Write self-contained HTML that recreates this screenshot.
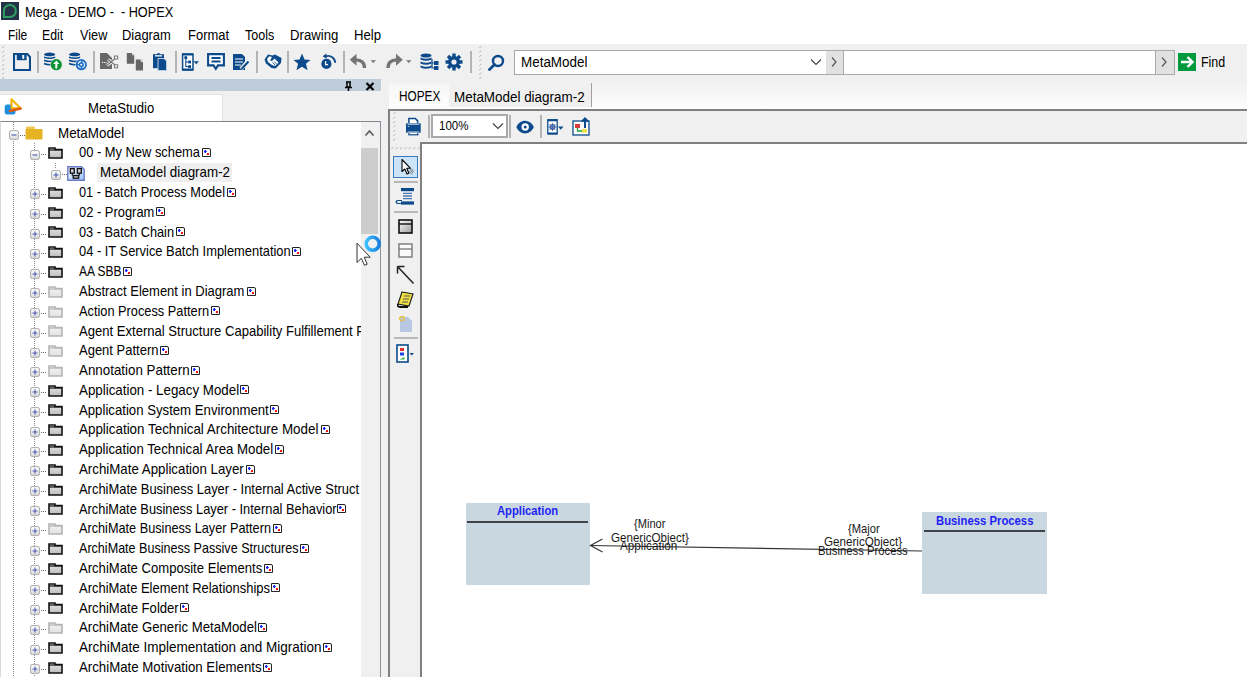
<!DOCTYPE html>
<html><head><meta charset="utf-8"><style>
html,body{margin:0;padding:0}
body{width:1247px;height:677px;position:relative;overflow:hidden;background:#fff;font-family:"Liberation Sans", sans-serif}
.t{position:absolute;white-space:nowrap;font-family:"Liberation Sans", sans-serif}
.tr{font-size:13.9px;line-height:13.9px;color:#000}
.bd{width:9px;height:9px;box-sizing:border-box;border:1.5px solid #222;border-radius:0 2px 0 0;background:radial-gradient(circle at 33% 36%,#1020ff 0 1.1px,transparent 1.5px),radial-gradient(circle at 70% 73%,#ff1010 0 1.1px,transparent 1.5px),#fff}
</style></head><body>
<svg style="position:absolute;left:1px;top:2px" width="18" height="18" viewBox="0 0 18 18"><rect width="18" height="18" fill="#233246"/><path d="M2.9 15 V8.6 A6 6 0 1 1 8.9 14.9 Z" fill="none" stroke="#2e9e62" stroke-width="2" stroke-linejoin="miter"/></svg>
<div class="t " style="left:25px;top:5.11px;font-size:14.4px;line-height:14.4px;color:#000;transform:scaleX(0.8820);transform-origin:0 0;">Mega - DEMO -  - HOPEX</div>
<div class="t " style="left:7.6px;top:27.75px;font-size:14px;line-height:14px;color:#000;transform:scaleX(0.8511);transform-origin:0 0;">File</div>
<div class="t " style="left:42.3px;top:27.75px;font-size:14px;line-height:14px;color:#000;transform:scaleX(0.8788);transform-origin:0 0;">Edit</div>
<div class="t " style="left:79.5px;top:27.75px;font-size:14px;line-height:14px;color:#000;transform:scaleX(0.9072);transform-origin:0 0;">View</div>
<div class="t " style="left:122.3px;top:27.75px;font-size:14px;line-height:14px;color:#000;transform:scaleX(0.9224);transform-origin:0 0;">Diagram</div>
<div class="t " style="left:187.5px;top:27.75px;font-size:14px;line-height:14px;color:#000;transform:scaleX(0.9270);transform-origin:0 0;">Format</div>
<div class="t " style="left:244.7px;top:27.75px;font-size:14px;line-height:14px;color:#000;transform:scaleX(0.8934);transform-origin:0 0;">Tools</div>
<div class="t " style="left:289.6px;top:27.75px;font-size:14px;line-height:14px;color:#000;transform:scaleX(0.9406);transform-origin:0 0;">Drawing</div>
<div class="t " style="left:353.6px;top:27.75px;font-size:14px;line-height:14px;color:#000;transform:scaleX(0.9377);transform-origin:0 0;">Help</div>
<div style="position:absolute;left:0px;top:44px;width:1247px;height:35px;background:#f0f0f0"></div>
<svg style="position:absolute;left:2px;top:46px" width="3" height="33"><path d="M2.2 0.3 L0.3 2.2 M2.2 4.7 L0.3 6.6 M2.2 9.1 L0.3 11.0 M2.2 13.5 L0.3 15.4 M2.2 17.9 L0.3 19.8 M2.2 22.3 L0.3 24.2 M2.2 26.7 L0.3 28.6 M2.2 31.1 L0.3 33.0 " stroke="#aaaaaa" stroke-width="1"/></svg>
<svg style="position:absolute;left:479px;top:46px" width="3" height="33"><path d="M2.2 0.3 L0.3 2.2 M2.2 4.7 L0.3 6.6 M2.2 9.1 L0.3 11.0 M2.2 13.5 L0.3 15.4 M2.2 17.9 L0.3 19.8 M2.2 22.3 L0.3 24.2 M2.2 26.7 L0.3 28.6 M2.2 31.1 L0.3 33.0 " stroke="#aaaaaa" stroke-width="1"/></svg>
<div style="position:absolute;left:37px;top:51px;width:1px;height:22px;background:#b4b4b4"></div>
<div style="position:absolute;left:38px;top:51px;width:1px;height:22px;background:#b4b4b4"></div>
<div style="position:absolute;left:93px;top:51px;width:1px;height:22px;background:#b4b4b4"></div>
<div style="position:absolute;left:94px;top:51px;width:1px;height:22px;background:#b4b4b4"></div>
<div style="position:absolute;left:175px;top:51px;width:1px;height:22px;background:#b4b4b4"></div>
<div style="position:absolute;left:176px;top:51px;width:1px;height:22px;background:#b4b4b4"></div>
<div style="position:absolute;left:256px;top:51px;width:1px;height:22px;background:#b4b4b4"></div>
<div style="position:absolute;left:257px;top:51px;width:1px;height:22px;background:#b4b4b4"></div>
<div style="position:absolute;left:287px;top:51px;width:1px;height:22px;background:#b4b4b4"></div>
<div style="position:absolute;left:288px;top:51px;width:1px;height:22px;background:#b4b4b4"></div>
<div style="position:absolute;left:343px;top:51px;width:1px;height:22px;background:#b4b4b4"></div>
<div style="position:absolute;left:344px;top:51px;width:1px;height:22px;background:#b4b4b4"></div>
<div style="position:absolute;left:470px;top:51px;width:1px;height:22px;background:#b4b4b4"></div>
<div style="position:absolute;left:471px;top:51px;width:1px;height:22px;background:#b4b4b4"></div>
<svg style="position:absolute;left:13px;top:53px" width="18" height="18" viewBox="0 0 18 18"><path d="M1 1 H14.3 L17 3.9 V17 H1 Z" fill="none" stroke="#0c4a8b" stroke-width="2.1"/><rect x="3.8" y="2" width="9.8" height="5.2" fill="#0c4a8b"/><rect x="9.3" y="2" width="1.9" height="3.8" fill="#fff"/></svg>
<svg style="position:absolute;left:43px;top:52px" width="21" height="20" viewBox="0 0 21 20"><ellipse cx="6.6" cy="2.4" rx="5.6" ry="1.8" fill="#0c4a8b"/><path d="M1 4.4 Q6.6 6.6 12.2 4.4 V6 Q6.6 8.2 1 6Z M1 7.6 Q6.6 9.8 12.2 7.6 V9.2 Q6.6 11.4 1 9.2Z M1 10.8 Q6.6 13 12.2 10.8 V12.4 Q6.6 14.6 1 12.4Z" fill="#0c4a8b"/><circle cx="13.3" cy="12.7" r="6" fill="#f0f0f0"/><circle cx="13.3" cy="12.7" r="5.6" fill="#0a9436"/><path d="M13.3 16.6 V10.5" stroke="#fff" stroke-width="2"/><path d="M10.2 12 L13.3 8.6 L16.4 12Z" fill="#fff"/></svg>
<svg style="position:absolute;left:68px;top:52px" width="21" height="20" viewBox="0 0 21 20"><ellipse cx="6.6" cy="2.4" rx="5.6" ry="1.8" fill="#0c4a8b"/><path d="M1 4.4 Q6.6 6.6 12.2 4.4 V6 Q6.6 8.2 1 6Z M1 7.6 Q6.6 9.8 12.2 7.6 V9.2 Q6.6 11.4 1 9.2Z M1 10.8 Q6.6 13 12.2 10.8 V12.4 Q6.6 14.6 1 12.4Z" fill="#0c4a8b"/><circle cx="13.3" cy="12.7" r="6" fill="#f0f0f0"/><circle cx="13.3" cy="12.7" r="5.6" fill="#1f6fc8"/><circle cx="13.3" cy="12.7" r="3.3" fill="none" stroke="#fff" stroke-width="1.1" stroke-dasharray="4 1.5"/><circle cx="13.3" cy="12.7" r="1" fill="#fff"/></svg>
<svg style="position:absolute;left:100px;top:53px" width="19" height="17" viewBox="0 0 19 17"><path d="M0 0 H7 L12 5 V16 H0Z" fill="#686868"/><path d="M2 9.5 H7" stroke="#fff" stroke-width="1" stroke-dasharray="1.2 1"/><path d="M7 12.5 L17 4.5 M8 6.5 L17 13" stroke="#f0f0f0" stroke-width="3"/><path d="M7 12.5 L15 5.5 M8 6.5 L15 12" stroke="#777" stroke-width="1.3"/><rect x="14.5" y="3" width="3.2" height="3" fill="none" stroke="#777" stroke-width="1"/><rect x="14.5" y="11.8" width="3.2" height="3" fill="none" stroke="#777" stroke-width="1"/></svg>
<svg style="position:absolute;left:126px;top:53px" width="18" height="18" viewBox="0 0 18 18"><path d="M0.8 0 H6.5 L8.2 1.8 V10.8 H0.8Z M9.8 6.5 H15 L17 8.5 V17.5 H9.8Z" fill="#666"/><path d="M6.5 0 V1.8 H8.2 M15 6.5 V8.5 H17" stroke="#fff" stroke-width="0.8" fill="none"/></svg>
<svg style="position:absolute;left:152px;top:53px" width="15" height="18" viewBox="0 0 15 18"><path d="M1 1.2 H12 V15.2 H1Z" fill="#0c4a8b"/><circle cx="6.5" cy="1" r="1.2" fill="#0c4a8b"/><rect x="3" y="2.2" width="7" height="1.3" fill="#fff"/><path d="M6 5.5 H12 L14.5 8 V17.5 H6Z" fill="#0c4a8b" stroke="#b8cce0" stroke-width="1"/></svg>
<svg style="position:absolute;left:181px;top:53px" width="20" height="18" viewBox="0 0 20 18"><rect x="1.6" y="1" width="10.4" height="16" fill="#fff" stroke="#0c4a8b" stroke-width="1.5"/><path d="M1.6 1.5 H12 M1.6 16.5 H12" stroke="#0c4a8b" stroke-width="2"/><path d="M4.8 4 V13.5 H8 M4.8 9 H8" stroke="#0c4a8b" stroke-width="1.1" fill="none"/><rect x="3.4" y="3.2" width="2.8" height="2.8" fill="#0c4a8b"/><rect x="7.2" y="7.6" width="2.8" height="2.8" fill="#0c4a8b"/><rect x="7.2" y="12.2" width="2.8" height="2.8" fill="#0c4a8b"/><path d="M12.5 8.2 H18 L15.25 11.3Z" fill="#0c4a8b"/></svg>
<svg style="position:absolute;left:207px;top:53px" width="18" height="18" viewBox="0 0 18 18"><path d="M1.1 1.1 H16.9 V12.4 H11 L8.8 15.8 L6.6 12.4 H1.1Z" fill="#fff" stroke="#0c4a8b" stroke-width="2.1"/><path d="M4.5 5 H13.5 M4.5 8.5 H13.5" stroke="#0c4a8b" stroke-width="1.8"/></svg>
<svg style="position:absolute;left:232px;top:53px" width="18" height="18" viewBox="0 0 18 18"><path d="M1 1 H10 L13 4 V17 H1Z" fill="#0c4a8b"/><path d="M3 6 H11 M3 9 H11 M3 12 H9" stroke="#fff" stroke-width="1.2"/><path d="M9 16 L16 8" stroke="#f0f0f0" stroke-width="4"/><path d="M9.5 16 L16.5 8.5" stroke="#0c4a8b" stroke-width="2"/></svg>
<svg style="position:absolute;left:264px;top:53px" width="18" height="16" viewBox="0 0 18 16"><path d="M0.5 6.5 L4 1.5 L8.5 2.5 L11 1.5 L17.5 5 L17 10 L11.5 15.5 L7.5 15 L2 10.5Z" fill="#0c4a8b"/><path d="M3 6 L5.3 3.3 L8 4 L6 7.5 L8 8 L10.5 5.5 L14.5 9.5 L11 13 L8 12 L4 9Z" fill="#fff"/><path d="M8.5 9.5 L11 12 M10 8.5 L12.5 11" stroke="#0c4a8b" stroke-width="0.9"/></svg>
<svg style="position:absolute;left:293px;top:53px" width="18" height="18" viewBox="0 0 18 18"><path d="M9 0.5 L11.5 6.6 L17.5 6.9 L12.9 10.8 L14.6 17.3 L9 13.8 L3.4 17.3 L5.1 10.8 L0.5 6.9 L6.5 6.6Z" fill="#0c4a8b"/></svg>
<svg style="position:absolute;left:320px;top:53px" width="17" height="18" viewBox="0 0 17 18"><circle cx="6.4" cy="10.9" r="5.1" fill="#0c4a8b"/><path d="M5.6 8.3 V11.6 H8" stroke="#fff" stroke-width="1.3" fill="none"/><path d="M6 3.3 A7 7 0 0 1 15.2 9.8" stroke="#0c4a8b" stroke-width="1.9" fill="none"/><path d="M2.6 3.2 L6.5 0.6 V5.8Z" fill="#0c4a8b"/></svg>
<svg style="position:absolute;left:349px;top:53px" width="28" height="18" viewBox="0 0 28 18"><path d="M15.5 15 Q15.5 6.8 7 6.8" stroke="#747474" stroke-width="3.3" fill="none"/><path d="M0.8 6.8 L7.5 0.8 V12.8Z" fill="#747474"/><path d="M21.5 7.2 H27 L24.25 10Z" fill="#747474"/></svg>
<svg style="position:absolute;left:386px;top:53px" width="27" height="18" viewBox="0 0 27 18"><path d="M2 15 Q2 6.8 10.5 6.8" stroke="#747474" stroke-width="3.3" fill="none"/><path d="M16.8 6.8 L10 0.8 V12.8Z" fill="#747474"/><path d="M20 7.2 H25.5 L22.75 10Z" fill="#747474"/></svg>
<svg style="position:absolute;left:420px;top:53px" width="19" height="18" viewBox="0 0 19 18"><ellipse cx="6" cy="2.5" rx="5.5" ry="2" fill="#0c4a8b"/><path d="M0.5 4.5 Q6 7 11.5 4.5 V6.5 Q6 9 0.5 6.5Z M0.5 8.5 Q6 11 11.5 8.5 V10.5 Q6 13 0.5 10.5Z M0.5 12.5 Q6 15 11.5 12.5 V14.5 Q6 17 0.5 14.5Z" fill="#0c4a8b"/><path d="M12 6 V15 H15 M12 10 H15" stroke="#0c4a8b" stroke-width="1.2" fill="none"/><rect x="14" y="8" width="4.5" height="4" fill="#0c4a8b"/><rect x="14" y="13" width="4.5" height="4" fill="#0c4a8b"/></svg>
<svg style="position:absolute;left:445px;top:53px" width="18" height="18" viewBox="0 0 18 18"><circle cx="9" cy="9" r="6" fill="#0c4a8b"/><path d="M9 0.5 V17.5 M0.5 9 H17.5 M3 3 L15 15 M15 3 L3 15" stroke="#0c4a8b" stroke-width="3.4"/><circle cx="9" cy="9" r="2.6" fill="#f0f0f0"/></svg>
<svg style="position:absolute;left:488px;top:54px" width="17" height="17" viewBox="0 0 17 17"><circle cx="10" cy="7" r="5" fill="none" stroke="#0c4a8b" stroke-width="2.4"/><path d="M6.5 10.5 L1.5 15.5" stroke="#0c4a8b" stroke-width="2.8" stroke-linecap="round"/></svg>
<div style="position:absolute;left:514px;top:50px;width:311px;height:23px;background:#fff;border:1px solid #a9a9a9"></div>
<div class="t " style="left:521.3px;top:55.15px;font-size:14px;line-height:14px;color:#000;transform:scaleX(0.9588);transform-origin:0 0;">MetaModel</div>
<svg style="position:absolute;left:810px;top:58px" width="12" height="8" viewBox="0 0 12 8"><path d="M1 1.5 L6 6.5 L11 1.5" stroke="#444" stroke-width="1.2" fill="none"/></svg>
<div style="position:absolute;left:826px;top:50px;width:17px;height:23px;background:#e1e1e1;border:1px solid #a9a9a9;border-left:none"></div>
<svg style="position:absolute;left:830px;top:56px" width="8" height="12" viewBox="0 0 8 12"><path d="M2 1.5 L6 6 L2 10.5" stroke="#555" stroke-width="1.2" fill="none"/></svg>
<div style="position:absolute;left:844px;top:50px;width:311px;height:23px;background:#fff;border:1px solid #a9a9a9;border-left:none"></div>
<div style="position:absolute;left:1155px;top:50px;width:18px;height:23px;background:#e1e1e1;border:1px solid #a9a9a9"></div>
<svg style="position:absolute;left:1160px;top:56px" width="8" height="12" viewBox="0 0 8 12"><path d="M2 1.5 L6 6 L2 10.5" stroke="#555" stroke-width="1.2" fill="none"/></svg>
<svg style="position:absolute;left:1178px;top:53px" width="18" height="18" viewBox="0 0 18 18"><rect width="18" height="18" fill="#009a3e"/><path d="M3 9 H14 M9.5 4 L14.5 9 L9.5 14" stroke="#fff" stroke-width="2.4" fill="none"/></svg>
<div class="t " style="left:1200.5px;top:54.75px;font-size:14px;line-height:14px;color:#000;transform:scaleX(0.8886);transform-origin:0 0;">Find</div>
<div style="position:absolute;left:0px;top:79px;width:381px;height:12px;background:#bfcddb"></div>
<svg style="position:absolute;left:344px;top:81px" width="9" height="11" viewBox="0 0 9 11"><path d="M2 1 H7 M3 1 V6 H6 V1 M1 6.5 H8 M4.5 6.5 V11" stroke="#000" stroke-width="1.5" fill="none"/></svg>
<svg style="position:absolute;left:365px;top:82px" width="10" height="9" viewBox="0 0 10 9"><path d="M1.5 1 L8.5 8 M8.5 1 L1.5 8" stroke="#000" stroke-width="2.2"/></svg>
<div style="position:absolute;left:0px;top:91px;width:381px;height:30px;background:#f0f0f0"></div>
<div style="position:absolute;left:0px;top:94px;width:223px;height:27px;background:#fff;border-top:1px solid #e3e3e3;border-right:1px solid #e3e3e3;box-sizing:border-box"></div>
<svg style="position:absolute;left:3px;top:96px" width="20" height="20" viewBox="0 0 20 20"><rect x="1.7" y="8.5" width="10.8" height="10" rx="2.5" fill="#1e90e0"/><path d="M8.4 3.2 L8.6 12.2 L17.6 12.3Z" fill="#fff" stroke="#f3b400" stroke-width="2" stroke-linejoin="round"/><path d="M7 15 L17.5 12.6" stroke="#e05a10" stroke-width="2.6" stroke-linecap="round"/></svg>
<div class="t " style="left:87.6px;top:101.15px;font-size:14px;line-height:14px;color:#000;transform:scaleX(0.9362);transform-origin:0 0;">MetaStudio</div>
<div style="position:absolute;left:0px;top:121px;width:381px;height:556px;background:#fff;border-top:1px solid #828790;border-right:1px solid #8a939c;border-left:1px solid #d9d9d9;box-sizing:border-box"></div>
<div style="position:absolute;left:361px;top:122px;width:19px;height:555px;background:#f0f0f0"></div>
<svg style="position:absolute;left:364px;top:129px" width="11" height="8" viewBox="0 0 11 8"><path d="M1.5 6.5 L5.5 2 L9.5 6.5" stroke="#606060" stroke-width="1.8" fill="none"/></svg>
<div style="position:absolute;left:361px;top:148px;width:17px;height:86px;background:#cdcdcd"></div>
<div style="position:absolute;left:381px;top:79px;width:866px;height:598px;background:#f0f0f0"></div>
<div style="position:absolute;left:389px;top:79px;width:858px;height:30px;background:linear-gradient(#f0f0f0,#fdfdfd)"></div>
<div style="position:absolute;left:389px;top:85px;width:60px;height:22px;background:linear-gradient(#f7f7f7,#fdfdfd)"></div>
<div class="t " style="left:399px;top:88.65px;font-size:14px;line-height:14px;color:#000;transform:scaleX(0.8426);transform-origin:0 0;">HOPEX</div>
<div style="position:absolute;left:449px;top:83px;width:143px;height:24px;background:#f0f0f0;border-right:1px solid #a0a0a0;box-sizing:border-box"></div>
<div class="t " style="left:454px;top:89.55px;font-size:14px;line-height:14px;color:#000;transform:scaleX(0.9591);transform-origin:0 0;">MetaModel diagram-2</div>
<div style="position:absolute;left:388px;top:109px;width:859px;height:568px;background:#f0f0f0;border-left:2px solid #808080;border-top:2px solid #808080;box-sizing:border-box"></div>
<svg style="position:absolute;left:393px;top:112px" width="3" height="30"><path d="M2.2 0.3 L0.3 2.2 M2.2 4.7 L0.3 6.6 M2.2 9.1 L0.3 11.0 M2.2 13.5 L0.3 15.4 M2.2 17.9 L0.3 19.8 M2.2 22.3 L0.3 24.2 M2.2 26.7 L0.3 28.6 " stroke="#aaaaaa" stroke-width="1"/></svg>
<div style="position:absolute;left:428px;top:115px;width:1px;height:23px;background:#b4b4b4"></div>
<div style="position:absolute;left:429px;top:115px;width:1px;height:23px;background:#b4b4b4"></div>
<svg style="position:absolute;left:406px;top:117px" width="16" height="19" viewBox="0 0 16 19"><path d="M2.9 6.5 V1.4 H9.3 L11.6 3.9 V6.5" fill="#fff" stroke="#0c4a8b" stroke-width="1.5"/><rect x="0" y="6.3" width="14.7" height="9.4" fill="#0c4a8b"/><rect x="1.5" y="6.5" width="11.7" height="1.4" fill="#a9bfd8"/><rect x="1.8" y="9" width="1.6" height="1" fill="#a9bfd8"/><rect x="2.9" y="15.2" width="8.9" height="2.6" fill="#fff" stroke="#0c4a8b" stroke-width="1.2"/><rect x="1.5" y="14.6" width="11.7" height="0.9" fill="#fff"/></svg>
<div style="position:absolute;left:431px;top:114px;width:77px;height:24px;background:#fff;border:2px solid #a9a9a9;box-sizing:border-box"></div>
<div class="t " style="left:438.6px;top:119.56px;font-size:12.8px;line-height:12.8px;color:#000;transform:scaleX(0.8980);transform-origin:0 0;">100%</div>
<svg style="position:absolute;left:492px;top:122px" width="12" height="8" viewBox="0 0 12 8"><path d="M1 1.5 L6 6.5 L11 1.5" stroke="#444" stroke-width="1.2" fill="none"/></svg>
<div style="position:absolute;left:509px;top:115px;width:1px;height:23px;background:#b4b4b4"></div>
<div style="position:absolute;left:510px;top:115px;width:1px;height:23px;background:#b4b4b4"></div>
<svg style="position:absolute;left:516px;top:120px" width="19" height="14" viewBox="0 0 19 14"><path d="M0.3 7 C4 -1.5 14 -1.5 17.9 7 C14 15.5 4 15.5 0.3 7Z" fill="#0c4a8b"/><circle cx="9.2" cy="7" r="3.7" fill="#fff"/><circle cx="9.2" cy="7" r="1.5" fill="#0c4a8b"/></svg>
<div style="position:absolute;left:540px;top:115px;width:1px;height:23px;background:#b4b4b4"></div>
<div style="position:absolute;left:541px;top:115px;width:1px;height:23px;background:#b4b4b4"></div>
<svg style="position:absolute;left:547px;top:119px" width="18" height="16" viewBox="0 0 18 16"><rect x="0.8" y="0.8" width="9.4" height="14" fill="#fff" stroke="#0c4a8b" stroke-width="1.3"/><path d="M0.8 1.2 H10.2 M0.8 14.5 H10.2" stroke="#0c4a8b" stroke-width="2"/><circle cx="5.5" cy="8" r="2.2" fill="none" stroke="#4a6aa8" stroke-width="1.6"/><path d="M5.5 4 V12 M1.5 8 H9.5 M2.7 5.2 L8.3 10.8 M8.3 5.2 L2.7 10.8" stroke="#4a6aa8" stroke-width="1"/><path d="M11 7.5 H16.5 L13.75 10.8Z" fill="#0c4a8b"/></svg>
<svg style="position:absolute;left:572px;top:117px" width="18" height="19" viewBox="0 0 18 19"><rect x="1" y="4" width="16" height="14" fill="#fff" stroke="#0c4a8b" stroke-width="1.3"/><rect x="3" y="7" width="5" height="4" fill="#d63a3a"/><rect x="10" y="12" width="5" height="3.5" fill="#f0e040"/><path d="M5.5 11 V14 H10" stroke="#20a040" stroke-width="1.3" fill="none"/><path d="M13 11 V2 M10 4.5 L13 1.5 L16 4.5" stroke="#0c4a8b" stroke-width="2" fill="none"/></svg>
<div style="position:absolute;left:420px;top:142px;width:827px;height:535px;background:#fff;border-left:2px solid #808080;border-top:2px solid #808080;box-sizing:border-box"></div>
<svg style="position:absolute;left:391px;top:147px" width="29" height="3"><path d="M2.2 0.3 L0.3 2.2 M6.6 0.3 L4.7 2.2 M11.0 0.3 L9.1 2.2 M15.4 0.3 L13.5 2.2 M19.8 0.3 L17.9 2.2 M24.2 0.3 L22.3 2.2 M28.6 0.3 L26.7 2.2 " stroke="#aaaaaa" stroke-width="1"/></svg>
<div style="position:absolute;left:393px;top:156px;width:25px;height:22px;background:#cce4f7;border:1px solid #3a7cc4;box-sizing:border-box"></div>
<svg style="position:absolute;left:400px;top:158px" width="15" height="18" viewBox="0 0 15 18"><path d="M2 1.5 V13.5 L4.8 11 L7 16 L8.8 15.2 L6.8 10.3 H10.5Z" fill="#fff" stroke="#000" stroke-width="1.1" stroke-linejoin="round"/><path d="M8.5 12.5 L12 16.5 M10 11.5 L13 15 M11 10.5 L13.5 13.5" stroke="#666" stroke-width="0.9"/></svg>
<div style="position:absolute;left:394px;top:181px;width:24px;height:2px;background:#b9b9b9"></div>
<svg style="position:absolute;left:395px;top:187px" width="20" height="18" viewBox="0 0 20 18"><rect x="6" y="1" width="13" height="3.2" fill="#0c4a8b"/><rect x="6" y="14.4" width="13" height="3.2" fill="#0c4a8b"/><path d="M8 6.3 H17 M8 9 H17 M8 11.7 H17" stroke="#4a78b0" stroke-width="1.3"/><path d="M7 13.5 H3.5 Q1.2 13.5 1.2 15 Q1.2 16.5 3.5 16.5 H6" stroke="#0c4a8b" stroke-width="1.2" fill="none"/></svg>
<div style="position:absolute;left:394px;top:211px;width:24px;height:2px;background:#b9b9b9"></div>
<svg style="position:absolute;left:398px;top:219px" width="15" height="15" viewBox="0 0 15 15"><rect x="1" y="1" width="13" height="13" fill="url(#g1)" stroke="#111" stroke-width="1.6"/><path d="M1 5 H14" stroke="#111" stroke-width="1.4"/><defs><linearGradient id="g1" x1="0" y1="0" x2="1" y2="1"><stop offset="0" stop-color="#fff"/><stop offset="1" stop-color="#999"/></linearGradient></defs></svg>
<svg style="position:absolute;left:398px;top:243px" width="15" height="15" viewBox="0 0 15 15"><rect x="1" y="1" width="13" height="13" fill="#fafafa" stroke="#777" stroke-width="1.4"/><path d="M1 6 H14" stroke="#777" stroke-width="1.3"/></svg>
<svg style="position:absolute;left:396px;top:265px" width="19" height="20" viewBox="0 0 19 20"><path d="M1.5 1.5 L17.5 18.5 M1.5 1.5 H8.5 M1.5 1.5 V8.5" stroke="#222" stroke-width="1.5" fill="none"/></svg>
<svg style="position:absolute;left:397px;top:290px" width="17" height="19" viewBox="0 0 17 19"><path d="M5 2 L16 4 L12 16 L1 14Z" fill="#f0e040" stroke="#222" stroke-width="1.2"/><path d="M7 6 H13 M6 9 H12 M5 12 H11" stroke="#555" stroke-width="1.1"/><path d="M1 14 Q0 17 3 17 L11 17" stroke="#111" stroke-width="1.8" fill="none"/></svg>
<svg style="position:absolute;left:398px;top:315px" width="15" height="18" viewBox="0 0 15 18"><path d="M2 2 H10 L14 6 V17 H2Z" fill="#b8c8e0"/><ellipse cx="4" cy="3.5" rx="2.5" ry="2" fill="none" stroke="#e8c040" stroke-width="1.3"/></svg>
<div style="position:absolute;left:394px;top:337px;width:24px;height:2px;background:#b9b9b9"></div>
<svg style="position:absolute;left:396px;top:344px" width="19" height="19" viewBox="0 0 19 19"><rect x="1" y="1" width="11" height="17" fill="#fff" stroke="#0c4a8b" stroke-width="1.6"/><rect x="4" y="4" width="4" height="3" fill="#e03030"/><rect x="4" y="8.5" width="4" height="3" fill="#2040e0"/><path d="M3.5 15.5 L8.5 13 V15.5Z" fill="#30b040"/><path d="M13.5 9 H18 L15.75 11.5Z" fill="#0c4a8b"/></svg>
<svg style="position:absolute;left:0;top:0" width="1247" height="677"><rect x="466" y="503" width="124" height="82" fill="#c8d7e0"/><path d="M467 522 H588" stroke="#404448" stroke-width="2"/><rect x="922" y="512" width="125" height="82" fill="#c8d7e0"/><path d="M924 531 H1045" stroke="#404448" stroke-width="2"/><path d="M590.5 545.5 L922 551" stroke="#333" stroke-width="1.2"/><path d="M602.5 539 L590.5 545.5 L602.5 552" stroke="#333" stroke-width="1.2" fill="none"/></svg>
<div class="t " style="left:496.5px;top:505.46px;font-size:12.8px;line-height:12.8px;color:#1f1ff5;transform:scaleX(0.8768);transform-origin:0 0;font-weight:bold;">Application</div>
<div class="t " style="left:935.5px;top:514.53px;font-size:12.6px;line-height:12.6px;color:#1f1ff5;transform:scaleX(0.8981);transform-origin:0 0;font-weight:bold;">Business Process</div>
<div class="t " style="left:634.1px;top:518.36px;font-size:12.8px;line-height:12.8px;color:#1a1a1a;transform:scaleX(0.8655);transform-origin:0 0;">{Minor</div>
<div class="t " style="left:610.7px;top:532.16px;font-size:12.8px;line-height:12.8px;color:#1a1a1a;transform:scaleX(0.9049);transform-origin:0 0;">GenericObject}</div>
<div class="t " style="left:619.7px;top:540.30px;font-size:12.4px;line-height:12.4px;color:#1a1a1a;transform:scaleX(0.9446);transform-origin:0 0;">Application</div>
<div class="t " style="left:847.7px;top:522.63px;font-size:12.6px;line-height:12.6px;color:#1a1a1a;transform:scaleX(0.8876);transform-origin:0 0;">{Major</div>
<div class="t " style="left:824.4px;top:536.16px;font-size:12.8px;line-height:12.8px;color:#1a1a1a;transform:scaleX(0.9084);transform-origin:0 0;">GenericObject}</div>
<div class="t " style="left:818px;top:544.50px;font-size:12.4px;line-height:12.4px;color:#1a1a1a;transform:scaleX(0.9112);transform-origin:0 0;">Business Process</div>
<div style="position:absolute;left:13px;top:122px;width:1px;height:7px;background:repeating-linear-gradient(to bottom,#888 0 1px,transparent 1px 2px)"></div>
<div style="position:absolute;left:13px;top:141px;width:1px;height:536px;background:repeating-linear-gradient(to bottom,#888 0 1px,transparent 1px 2px)"></div>
<div style="position:absolute;left:34px;top:143px;width:1px;height:534px;background:repeating-linear-gradient(to bottom,#888 0 1px,transparent 1px 2px)"></div>
<div style="position:absolute;left:55px;top:163px;width:1px;height:6px;background:repeating-linear-gradient(to bottom,#888 0 1px,transparent 1px 2px)"></div>
<div id="tree" style="position:absolute;left:0;top:0;width:361px;height:677px;overflow:hidden">
<svg style="position:absolute;left:9px;top:130px" width="10" height="10" viewBox="0 0 10 10"><defs><linearGradient id="eg0" x1="0" y1="0" x2="0" y2="1"><stop offset="0" stop-color="#fff"/><stop offset="1" stop-color="#dcdcdc"/></linearGradient></defs><rect x="0.6" y="0.6" width="8.8" height="8.8" rx="1.5" fill="url(#eg0)" stroke="#aaaaaa" stroke-width="1"/><path d="M2.5 5 H7.5" stroke="#4a5ab0" stroke-width="1.1"/></svg>
<div style="position:absolute;left:20px;top:135px;width:5px;height:1px;background:repeating-linear-gradient(to right,#666 0 1px,transparent 1px 2px)"></div>
<svg style="position:absolute;left:25px;top:126px" width="18" height="14" viewBox="0 0 18 14"><path d="M1 1.5 Q1 0.5 2 0.5 H9 Q10 0.5 10 1.5 V3 H1Z" fill="#f2c653"/><rect x="0.5" y="3" width="17" height="10.5" rx="1" fill="#e6b324"/></svg>
<div class="t tr" style="left:57.9px;top:126.63px;transform:scaleX(0.9642);transform-origin:0 0">MetaModel</div>
<svg style="position:absolute;left:30px;top:150px" width="10" height="10" viewBox="0 0 10 10"><defs><linearGradient id="eg1" x1="0" y1="0" x2="0" y2="1"><stop offset="0" stop-color="#fff"/><stop offset="1" stop-color="#dcdcdc"/></linearGradient></defs><rect x="0.6" y="0.6" width="8.8" height="8.8" rx="1.5" fill="url(#eg1)" stroke="#aaaaaa" stroke-width="1"/><path d="M2.5 5 H7.5" stroke="#4a5ab0" stroke-width="1.1"/></svg>
<div style="position:absolute;left:41px;top:154px;width:5px;height:1px;background:repeating-linear-gradient(to right,#666 0 1px,transparent 1px 2px)"></div>
<svg style="position:absolute;left:48px;top:147px" width="15" height="12" viewBox="0 0 15 12"><defs><linearGradient id="fg1" x1="0" y1="1" x2="0" y2="0"><stop offset="0" stop-color="#bdbdbd"/><stop offset="1" stop-color="#e6e6e6"/></linearGradient></defs><path d="M1 1 H7 V2.5 H14 V11 H1Z" fill="url(#fg1)" stroke="#111" stroke-width="1.6"/><path d="M1 3 H14" stroke="#111" stroke-width="1.2"/></svg>
<div class="t tr" style="left:78.5px;top:146.42px;transform:scaleX(0.9277);transform-origin:0 0">00 - My New schema</div>
<div class="bd" style="position:absolute;left:202.1px;top:148px"></div>
<svg style="position:absolute;left:51px;top:170px" width="10" height="10" viewBox="0 0 10 10"><defs><linearGradient id="eg2" x1="0" y1="0" x2="0" y2="1"><stop offset="0" stop-color="#fff"/><stop offset="1" stop-color="#dcdcdc"/></linearGradient></defs><rect x="0.6" y="0.6" width="8.8" height="8.8" rx="1.5" fill="url(#eg2)" stroke="#aaaaaa" stroke-width="1"/><path d="M2.5 5 H7.5 M5 2.5 V7.5" stroke="#4a5ab0" stroke-width="1.1"/></svg>
<div style="position:absolute;left:62px;top:174px;width:5px;height:1px;background:repeating-linear-gradient(to right,#666 0 1px,transparent 1px 2px)"></div>
<svg style="position:absolute;left:67px;top:166px" width="18" height="15" viewBox="0 0 18 15"><defs><linearGradient id="dg" x1="0" y1="0" x2="1" y2="1"><stop offset="0" stop-color="#fff"/><stop offset="1" stop-color="#98bff5"/></linearGradient></defs><path d="M0.8 0.8 H14.5 L17.2 3.5 V14.2 H0.8Z" fill="url(#dg)" stroke="#6a7ac8" stroke-width="1.4"/><rect x="3.3" y="2.6" width="4" height="4.6" fill="#ccc" stroke="#111" stroke-width="1.3"/><rect x="10.3" y="2.6" width="4" height="4.6" fill="#ccc" stroke="#111" stroke-width="1.3"/><path d="M5.3 7.2 V9.5 M12.3 7.2 V9.5" stroke="#111" stroke-width="1.3"/><rect x="6.2" y="9.6" width="5.4" height="2.6" fill="#ccc" stroke="#111" stroke-width="1.3"/></svg>
<div style="position:absolute;left:97px;top:163px;width:135px;height:19px;background:#efefef"></div>
<div class="t tr" style="left:99.8px;top:166.21px;transform:scaleX(0.9623);transform-origin:0 0">MetaModel diagram-2</div>
<svg style="position:absolute;left:30px;top:189px" width="10" height="10" viewBox="0 0 10 10"><defs><linearGradient id="eg3" x1="0" y1="0" x2="0" y2="1"><stop offset="0" stop-color="#fff"/><stop offset="1" stop-color="#dcdcdc"/></linearGradient></defs><rect x="0.6" y="0.6" width="8.8" height="8.8" rx="1.5" fill="url(#eg3)" stroke="#aaaaaa" stroke-width="1"/><path d="M2.5 5 H7.5 M5 2.5 V7.5" stroke="#4a5ab0" stroke-width="1.1"/></svg>
<div style="position:absolute;left:41px;top:194px;width:5px;height:1px;background:repeating-linear-gradient(to right,#666 0 1px,transparent 1px 2px)"></div>
<svg style="position:absolute;left:48px;top:187px" width="15" height="12" viewBox="0 0 15 12"><defs><linearGradient id="fg3" x1="0" y1="1" x2="0" y2="0"><stop offset="0" stop-color="#bdbdbd"/><stop offset="1" stop-color="#e6e6e6"/></linearGradient></defs><path d="M1 1 H7 V2.5 H14 V11 H1Z" fill="url(#fg3)" stroke="#111" stroke-width="1.6"/><path d="M1 3 H14" stroke="#111" stroke-width="1.2"/></svg>
<div class="t tr" style="left:78.5px;top:186.00px;transform:scaleX(0.9180);transform-origin:0 0">01 - Batch Process Model</div>
<div class="bd" style="position:absolute;left:226.8px;top:188px"></div>
<svg style="position:absolute;left:30px;top:209px" width="10" height="10" viewBox="0 0 10 10"><defs><linearGradient id="eg4" x1="0" y1="0" x2="0" y2="1"><stop offset="0" stop-color="#fff"/><stop offset="1" stop-color="#dcdcdc"/></linearGradient></defs><rect x="0.6" y="0.6" width="8.8" height="8.8" rx="1.5" fill="url(#eg4)" stroke="#aaaaaa" stroke-width="1"/><path d="M2.5 5 H7.5 M5 2.5 V7.5" stroke="#4a5ab0" stroke-width="1.1"/></svg>
<div style="position:absolute;left:41px;top:214px;width:5px;height:1px;background:repeating-linear-gradient(to right,#666 0 1px,transparent 1px 2px)"></div>
<svg style="position:absolute;left:48px;top:207px" width="15" height="12" viewBox="0 0 15 12"><defs><linearGradient id="fg4" x1="0" y1="1" x2="0" y2="0"><stop offset="0" stop-color="#bdbdbd"/><stop offset="1" stop-color="#e6e6e6"/></linearGradient></defs><path d="M1 1 H7 V2.5 H14 V11 H1Z" fill="url(#fg4)" stroke="#111" stroke-width="1.6"/><path d="M1 3 H14" stroke="#111" stroke-width="1.2"/></svg>
<div class="t tr" style="left:78.5px;top:205.79px;transform:scaleX(0.9296);transform-origin:0 0">02 - Program</div>
<div class="bd" style="position:absolute;left:155.8px;top:207px"></div>
<svg style="position:absolute;left:30px;top:229px" width="10" height="10" viewBox="0 0 10 10"><defs><linearGradient id="eg5" x1="0" y1="0" x2="0" y2="1"><stop offset="0" stop-color="#fff"/><stop offset="1" stop-color="#dcdcdc"/></linearGradient></defs><rect x="0.6" y="0.6" width="8.8" height="8.8" rx="1.5" fill="url(#eg5)" stroke="#aaaaaa" stroke-width="1"/><path d="M2.5 5 H7.5 M5 2.5 V7.5" stroke="#4a5ab0" stroke-width="1.1"/></svg>
<div style="position:absolute;left:41px;top:234px;width:5px;height:1px;background:repeating-linear-gradient(to right,#666 0 1px,transparent 1px 2px)"></div>
<svg style="position:absolute;left:48px;top:226px" width="15" height="12" viewBox="0 0 15 12"><defs><linearGradient id="fg5" x1="0" y1="1" x2="0" y2="0"><stop offset="0" stop-color="#bdbdbd"/><stop offset="1" stop-color="#e6e6e6"/></linearGradient></defs><path d="M1 1 H7 V2.5 H14 V11 H1Z" fill="url(#fg5)" stroke="#111" stroke-width="1.6"/><path d="M1 3 H14" stroke="#111" stroke-width="1.2"/></svg>
<div class="t tr" style="left:78.5px;top:225.58px;transform:scaleX(0.9185);transform-origin:0 0">03 - Batch Chain</div>
<div class="bd" style="position:absolute;left:175.5px;top:227px"></div>
<svg style="position:absolute;left:30px;top:249px" width="10" height="10" viewBox="0 0 10 10"><defs><linearGradient id="eg6" x1="0" y1="0" x2="0" y2="1"><stop offset="0" stop-color="#fff"/><stop offset="1" stop-color="#dcdcdc"/></linearGradient></defs><rect x="0.6" y="0.6" width="8.8" height="8.8" rx="1.5" fill="url(#eg6)" stroke="#aaaaaa" stroke-width="1"/><path d="M2.5 5 H7.5 M5 2.5 V7.5" stroke="#4a5ab0" stroke-width="1.1"/></svg>
<div style="position:absolute;left:41px;top:253px;width:5px;height:1px;background:repeating-linear-gradient(to right,#666 0 1px,transparent 1px 2px)"></div>
<svg style="position:absolute;left:48px;top:246px" width="15" height="12" viewBox="0 0 15 12"><defs><linearGradient id="fg6" x1="0" y1="1" x2="0" y2="0"><stop offset="0" stop-color="#bdbdbd"/><stop offset="1" stop-color="#e6e6e6"/></linearGradient></defs><path d="M1 1 H7 V2.5 H14 V11 H1Z" fill="url(#fg6)" stroke="#111" stroke-width="1.6"/><path d="M1 3 H14" stroke="#111" stroke-width="1.2"/></svg>
<div class="t tr" style="left:78.5px;top:245.37px;transform:scaleX(0.9272);transform-origin:0 0">04 - IT Service Batch Implementation</div>
<div class="bd" style="position:absolute;left:291.9px;top:247px"></div>
<svg style="position:absolute;left:30px;top:269px" width="10" height="10" viewBox="0 0 10 10"><defs><linearGradient id="eg7" x1="0" y1="0" x2="0" y2="1"><stop offset="0" stop-color="#fff"/><stop offset="1" stop-color="#dcdcdc"/></linearGradient></defs><rect x="0.6" y="0.6" width="8.8" height="8.8" rx="1.5" fill="url(#eg7)" stroke="#aaaaaa" stroke-width="1"/><path d="M2.5 5 H7.5 M5 2.5 V7.5" stroke="#4a5ab0" stroke-width="1.1"/></svg>
<div style="position:absolute;left:41px;top:273px;width:5px;height:1px;background:repeating-linear-gradient(to right,#666 0 1px,transparent 1px 2px)"></div>
<svg style="position:absolute;left:48px;top:266px" width="15" height="12" viewBox="0 0 15 12"><defs><linearGradient id="fg7" x1="0" y1="1" x2="0" y2="0"><stop offset="0" stop-color="#bdbdbd"/><stop offset="1" stop-color="#e6e6e6"/></linearGradient></defs><path d="M1 1 H7 V2.5 H14 V11 H1Z" fill="url(#fg7)" stroke="#111" stroke-width="1.6"/><path d="M1 3 H14" stroke="#111" stroke-width="1.2"/></svg>
<div class="t tr" style="left:78.5px;top:265.16px;transform:scaleX(0.8594);transform-origin:0 0">AA SBB</div>
<div class="bd" style="position:absolute;left:123.0px;top:267px"></div>
<svg style="position:absolute;left:30px;top:288px" width="10" height="10" viewBox="0 0 10 10"><defs><linearGradient id="eg8" x1="0" y1="0" x2="0" y2="1"><stop offset="0" stop-color="#fff"/><stop offset="1" stop-color="#dcdcdc"/></linearGradient></defs><rect x="0.6" y="0.6" width="8.8" height="8.8" rx="1.5" fill="url(#eg8)" stroke="#aaaaaa" stroke-width="1"/><path d="M2.5 5 H7.5 M5 2.5 V7.5" stroke="#4a5ab0" stroke-width="1.1"/></svg>
<div style="position:absolute;left:41px;top:293px;width:5px;height:1px;background:repeating-linear-gradient(to right,#666 0 1px,transparent 1px 2px)"></div>
<svg style="position:absolute;left:48px;top:286px" width="15" height="12" viewBox="0 0 15 12"><defs><linearGradient id="fg8" x1="0" y1="1" x2="0" y2="0"><stop offset="0" stop-color="#e2e2e2"/><stop offset="1" stop-color="#f4f4f4"/></linearGradient></defs><path d="M1 1 H7 V2.5 H14 V11 H1Z" fill="url(#fg8)" stroke="#b4b4b4" stroke-width="1.6"/><path d="M1 3 H14" stroke="#b4b4b4" stroke-width="1.2"/></svg>
<div class="t tr" style="left:78.5px;top:284.95px;transform:scaleX(0.9355);transform-origin:0 0">Abstract Element in Diagram</div>
<div class="bd" style="position:absolute;left:246.5px;top:287px"></div>
<svg style="position:absolute;left:30px;top:308px" width="10" height="10" viewBox="0 0 10 10"><defs><linearGradient id="eg9" x1="0" y1="0" x2="0" y2="1"><stop offset="0" stop-color="#fff"/><stop offset="1" stop-color="#dcdcdc"/></linearGradient></defs><rect x="0.6" y="0.6" width="8.8" height="8.8" rx="1.5" fill="url(#eg9)" stroke="#aaaaaa" stroke-width="1"/><path d="M2.5 5 H7.5 M5 2.5 V7.5" stroke="#4a5ab0" stroke-width="1.1"/></svg>
<div style="position:absolute;left:41px;top:313px;width:5px;height:1px;background:repeating-linear-gradient(to right,#666 0 1px,transparent 1px 2px)"></div>
<svg style="position:absolute;left:48px;top:306px" width="15" height="12" viewBox="0 0 15 12"><defs><linearGradient id="fg9" x1="0" y1="1" x2="0" y2="0"><stop offset="0" stop-color="#e2e2e2"/><stop offset="1" stop-color="#f4f4f4"/></linearGradient></defs><path d="M1 1 H7 V2.5 H14 V11 H1Z" fill="url(#fg9)" stroke="#b4b4b4" stroke-width="1.6"/><path d="M1 3 H14" stroke="#b4b4b4" stroke-width="1.2"/></svg>
<div class="t tr" style="left:78.5px;top:304.74px;transform:scaleX(0.9202);transform-origin:0 0">Action Process Pattern</div>
<div class="bd" style="position:absolute;left:210.5px;top:306px"></div>
<svg style="position:absolute;left:30px;top:328px" width="10" height="10" viewBox="0 0 10 10"><defs><linearGradient id="eg10" x1="0" y1="0" x2="0" y2="1"><stop offset="0" stop-color="#fff"/><stop offset="1" stop-color="#dcdcdc"/></linearGradient></defs><rect x="0.6" y="0.6" width="8.8" height="8.8" rx="1.5" fill="url(#eg10)" stroke="#aaaaaa" stroke-width="1"/><path d="M2.5 5 H7.5 M5 2.5 V7.5" stroke="#4a5ab0" stroke-width="1.1"/></svg>
<div style="position:absolute;left:41px;top:333px;width:5px;height:1px;background:repeating-linear-gradient(to right,#666 0 1px,transparent 1px 2px)"></div>
<svg style="position:absolute;left:48px;top:325px" width="15" height="12" viewBox="0 0 15 12"><defs><linearGradient id="fg10" x1="0" y1="1" x2="0" y2="0"><stop offset="0" stop-color="#e2e2e2"/><stop offset="1" stop-color="#f4f4f4"/></linearGradient></defs><path d="M1 1 H7 V2.5 H14 V11 H1Z" fill="url(#fg10)" stroke="#b4b4b4" stroke-width="1.6"/><path d="M1 3 H14" stroke="#b4b4b4" stroke-width="1.2"/></svg>
<div class="t tr" style="left:78.5px;top:324.53px;transform:scaleX(0.9404);transform-origin:0 0">Agent External Structure Capability Fulfillement F</div>
<svg style="position:absolute;left:30px;top:348px" width="10" height="10" viewBox="0 0 10 10"><defs><linearGradient id="eg11" x1="0" y1="0" x2="0" y2="1"><stop offset="0" stop-color="#fff"/><stop offset="1" stop-color="#dcdcdc"/></linearGradient></defs><rect x="0.6" y="0.6" width="8.8" height="8.8" rx="1.5" fill="url(#eg11)" stroke="#aaaaaa" stroke-width="1"/><path d="M2.5 5 H7.5 M5 2.5 V7.5" stroke="#4a5ab0" stroke-width="1.1"/></svg>
<div style="position:absolute;left:41px;top:352px;width:5px;height:1px;background:repeating-linear-gradient(to right,#666 0 1px,transparent 1px 2px)"></div>
<svg style="position:absolute;left:48px;top:345px" width="15" height="12" viewBox="0 0 15 12"><defs><linearGradient id="fg11" x1="0" y1="1" x2="0" y2="0"><stop offset="0" stop-color="#e2e2e2"/><stop offset="1" stop-color="#f4f4f4"/></linearGradient></defs><path d="M1 1 H7 V2.5 H14 V11 H1Z" fill="url(#fg11)" stroke="#b4b4b4" stroke-width="1.6"/><path d="M1 3 H14" stroke="#b4b4b4" stroke-width="1.2"/></svg>
<div class="t tr" style="left:78.5px;top:344.32px;transform:scaleX(0.9353);transform-origin:0 0">Agent Pattern</div>
<div class="bd" style="position:absolute;left:159.9px;top:346px"></div>
<svg style="position:absolute;left:30px;top:367px" width="10" height="10" viewBox="0 0 10 10"><defs><linearGradient id="eg12" x1="0" y1="0" x2="0" y2="1"><stop offset="0" stop-color="#fff"/><stop offset="1" stop-color="#dcdcdc"/></linearGradient></defs><rect x="0.6" y="0.6" width="8.8" height="8.8" rx="1.5" fill="url(#eg12)" stroke="#aaaaaa" stroke-width="1"/><path d="M2.5 5 H7.5 M5 2.5 V7.5" stroke="#4a5ab0" stroke-width="1.1"/></svg>
<div style="position:absolute;left:41px;top:372px;width:5px;height:1px;background:repeating-linear-gradient(to right,#666 0 1px,transparent 1px 2px)"></div>
<svg style="position:absolute;left:48px;top:365px" width="15" height="12" viewBox="0 0 15 12"><defs><linearGradient id="fg12" x1="0" y1="1" x2="0" y2="0"><stop offset="0" stop-color="#e2e2e2"/><stop offset="1" stop-color="#f4f4f4"/></linearGradient></defs><path d="M1 1 H7 V2.5 H14 V11 H1Z" fill="url(#fg12)" stroke="#b4b4b4" stroke-width="1.6"/><path d="M1 3 H14" stroke="#b4b4b4" stroke-width="1.2"/></svg>
<div class="t tr" style="left:78.5px;top:364.11px;transform:scaleX(0.9614);transform-origin:0 0">Annotation Pattern</div>
<div class="bd" style="position:absolute;left:191.1px;top:366px"></div>
<svg style="position:absolute;left:30px;top:387px" width="10" height="10" viewBox="0 0 10 10"><defs><linearGradient id="eg13" x1="0" y1="0" x2="0" y2="1"><stop offset="0" stop-color="#fff"/><stop offset="1" stop-color="#dcdcdc"/></linearGradient></defs><rect x="0.6" y="0.6" width="8.8" height="8.8" rx="1.5" fill="url(#eg13)" stroke="#aaaaaa" stroke-width="1"/><path d="M2.5 5 H7.5 M5 2.5 V7.5" stroke="#4a5ab0" stroke-width="1.1"/></svg>
<div style="position:absolute;left:41px;top:392px;width:5px;height:1px;background:repeating-linear-gradient(to right,#666 0 1px,transparent 1px 2px)"></div>
<svg style="position:absolute;left:48px;top:385px" width="15" height="12" viewBox="0 0 15 12"><defs><linearGradient id="fg13" x1="0" y1="1" x2="0" y2="0"><stop offset="0" stop-color="#bdbdbd"/><stop offset="1" stop-color="#e6e6e6"/></linearGradient></defs><path d="M1 1 H7 V2.5 H14 V11 H1Z" fill="url(#fg13)" stroke="#111" stroke-width="1.6"/><path d="M1 3 H14" stroke="#111" stroke-width="1.2"/></svg>
<div class="t tr" style="left:78.5px;top:383.90px;transform:scaleX(0.9599);transform-origin:0 0">Application - Legacy Model</div>
<div class="bd" style="position:absolute;left:240.2px;top:385px"></div>
<svg style="position:absolute;left:30px;top:407px" width="10" height="10" viewBox="0 0 10 10"><defs><linearGradient id="eg14" x1="0" y1="0" x2="0" y2="1"><stop offset="0" stop-color="#fff"/><stop offset="1" stop-color="#dcdcdc"/></linearGradient></defs><rect x="0.6" y="0.6" width="8.8" height="8.8" rx="1.5" fill="url(#eg14)" stroke="#aaaaaa" stroke-width="1"/><path d="M2.5 5 H7.5 M5 2.5 V7.5" stroke="#4a5ab0" stroke-width="1.1"/></svg>
<div style="position:absolute;left:41px;top:412px;width:5px;height:1px;background:repeating-linear-gradient(to right,#666 0 1px,transparent 1px 2px)"></div>
<svg style="position:absolute;left:48px;top:404px" width="15" height="12" viewBox="0 0 15 12"><defs><linearGradient id="fg14" x1="0" y1="1" x2="0" y2="0"><stop offset="0" stop-color="#bdbdbd"/><stop offset="1" stop-color="#e6e6e6"/></linearGradient></defs><path d="M1 1 H7 V2.5 H14 V11 H1Z" fill="url(#fg14)" stroke="#111" stroke-width="1.6"/><path d="M1 3 H14" stroke="#111" stroke-width="1.2"/></svg>
<div class="t tr" style="left:78.5px;top:403.69px;transform:scaleX(0.9490);transform-origin:0 0">Application System Environment</div>
<div class="bd" style="position:absolute;left:270.0px;top:405px"></div>
<svg style="position:absolute;left:30px;top:427px" width="10" height="10" viewBox="0 0 10 10"><defs><linearGradient id="eg15" x1="0" y1="0" x2="0" y2="1"><stop offset="0" stop-color="#fff"/><stop offset="1" stop-color="#dcdcdc"/></linearGradient></defs><rect x="0.6" y="0.6" width="8.8" height="8.8" rx="1.5" fill="url(#eg15)" stroke="#aaaaaa" stroke-width="1"/><path d="M2.5 5 H7.5 M5 2.5 V7.5" stroke="#4a5ab0" stroke-width="1.1"/></svg>
<div style="position:absolute;left:41px;top:432px;width:5px;height:1px;background:repeating-linear-gradient(to right,#666 0 1px,transparent 1px 2px)"></div>
<svg style="position:absolute;left:48px;top:424px" width="15" height="12" viewBox="0 0 15 12"><defs><linearGradient id="fg15" x1="0" y1="1" x2="0" y2="0"><stop offset="0" stop-color="#bdbdbd"/><stop offset="1" stop-color="#e6e6e6"/></linearGradient></defs><path d="M1 1 H7 V2.5 H14 V11 H1Z" fill="url(#fg15)" stroke="#111" stroke-width="1.6"/><path d="M1 3 H14" stroke="#111" stroke-width="1.2"/></svg>
<div class="t tr" style="left:78.5px;top:423.48px;transform:scaleX(0.9640);transform-origin:0 0">Application Technical Architecture Model</div>
<div class="bd" style="position:absolute;left:320.6px;top:425px"></div>
<svg style="position:absolute;left:30px;top:447px" width="10" height="10" viewBox="0 0 10 10"><defs><linearGradient id="eg16" x1="0" y1="0" x2="0" y2="1"><stop offset="0" stop-color="#fff"/><stop offset="1" stop-color="#dcdcdc"/></linearGradient></defs><rect x="0.6" y="0.6" width="8.8" height="8.8" rx="1.5" fill="url(#eg16)" stroke="#aaaaaa" stroke-width="1"/><path d="M2.5 5 H7.5 M5 2.5 V7.5" stroke="#4a5ab0" stroke-width="1.1"/></svg>
<div style="position:absolute;left:41px;top:451px;width:5px;height:1px;background:repeating-linear-gradient(to right,#666 0 1px,transparent 1px 2px)"></div>
<svg style="position:absolute;left:48px;top:444px" width="15" height="12" viewBox="0 0 15 12"><defs><linearGradient id="fg16" x1="0" y1="1" x2="0" y2="0"><stop offset="0" stop-color="#bdbdbd"/><stop offset="1" stop-color="#e6e6e6"/></linearGradient></defs><path d="M1 1 H7 V2.5 H14 V11 H1Z" fill="url(#fg16)" stroke="#111" stroke-width="1.6"/><path d="M1 3 H14" stroke="#111" stroke-width="1.2"/></svg>
<div class="t tr" style="left:78.5px;top:443.27px;transform:scaleX(0.9537);transform-origin:0 0">Application Technical Area Model</div>
<div class="bd" style="position:absolute;left:275.3px;top:445px"></div>
<svg style="position:absolute;left:30px;top:466px" width="10" height="10" viewBox="0 0 10 10"><defs><linearGradient id="eg17" x1="0" y1="0" x2="0" y2="1"><stop offset="0" stop-color="#fff"/><stop offset="1" stop-color="#dcdcdc"/></linearGradient></defs><rect x="0.6" y="0.6" width="8.8" height="8.8" rx="1.5" fill="url(#eg17)" stroke="#aaaaaa" stroke-width="1"/><path d="M2.5 5 H7.5 M5 2.5 V7.5" stroke="#4a5ab0" stroke-width="1.1"/></svg>
<div style="position:absolute;left:41px;top:471px;width:5px;height:1px;background:repeating-linear-gradient(to right,#666 0 1px,transparent 1px 2px)"></div>
<svg style="position:absolute;left:48px;top:464px" width="15" height="12" viewBox="0 0 15 12"><defs><linearGradient id="fg17" x1="0" y1="1" x2="0" y2="0"><stop offset="0" stop-color="#bdbdbd"/><stop offset="1" stop-color="#e6e6e6"/></linearGradient></defs><path d="M1 1 H7 V2.5 H14 V11 H1Z" fill="url(#fg17)" stroke="#111" stroke-width="1.6"/><path d="M1 3 H14" stroke="#111" stroke-width="1.2"/></svg>
<div class="t tr" style="left:78.5px;top:463.06px;transform:scaleX(0.9571);transform-origin:0 0">ArchiMate Application Layer</div>
<div class="bd" style="position:absolute;left:245.6px;top:465px"></div>
<svg style="position:absolute;left:30px;top:486px" width="10" height="10" viewBox="0 0 10 10"><defs><linearGradient id="eg18" x1="0" y1="0" x2="0" y2="1"><stop offset="0" stop-color="#fff"/><stop offset="1" stop-color="#dcdcdc"/></linearGradient></defs><rect x="0.6" y="0.6" width="8.8" height="8.8" rx="1.5" fill="url(#eg18)" stroke="#aaaaaa" stroke-width="1"/><path d="M2.5 5 H7.5 M5 2.5 V7.5" stroke="#4a5ab0" stroke-width="1.1"/></svg>
<div style="position:absolute;left:41px;top:491px;width:5px;height:1px;background:repeating-linear-gradient(to right,#666 0 1px,transparent 1px 2px)"></div>
<svg style="position:absolute;left:48px;top:484px" width="15" height="12" viewBox="0 0 15 12"><defs><linearGradient id="fg18" x1="0" y1="1" x2="0" y2="0"><stop offset="0" stop-color="#bdbdbd"/><stop offset="1" stop-color="#e6e6e6"/></linearGradient></defs><path d="M1 1 H7 V2.5 H14 V11 H1Z" fill="url(#fg18)" stroke="#111" stroke-width="1.6"/><path d="M1 3 H14" stroke="#111" stroke-width="1.2"/></svg>
<div class="t tr" style="left:78.5px;top:482.85px;transform:scaleX(0.9303);transform-origin:0 0">ArchiMate Business Layer - Internal Active Struct</div>
<svg style="position:absolute;left:30px;top:506px" width="10" height="10" viewBox="0 0 10 10"><defs><linearGradient id="eg19" x1="0" y1="0" x2="0" y2="1"><stop offset="0" stop-color="#fff"/><stop offset="1" stop-color="#dcdcdc"/></linearGradient></defs><rect x="0.6" y="0.6" width="8.8" height="8.8" rx="1.5" fill="url(#eg19)" stroke="#aaaaaa" stroke-width="1"/><path d="M2.5 5 H7.5 M5 2.5 V7.5" stroke="#4a5ab0" stroke-width="1.1"/></svg>
<div style="position:absolute;left:41px;top:511px;width:5px;height:1px;background:repeating-linear-gradient(to right,#666 0 1px,transparent 1px 2px)"></div>
<svg style="position:absolute;left:48px;top:503px" width="15" height="12" viewBox="0 0 15 12"><defs><linearGradient id="fg19" x1="0" y1="1" x2="0" y2="0"><stop offset="0" stop-color="#bdbdbd"/><stop offset="1" stop-color="#e6e6e6"/></linearGradient></defs><path d="M1 1 H7 V2.5 H14 V11 H1Z" fill="url(#fg19)" stroke="#111" stroke-width="1.6"/><path d="M1 3 H14" stroke="#111" stroke-width="1.2"/></svg>
<div class="t tr" style="left:78.5px;top:502.64px;transform:scaleX(0.9243);transform-origin:0 0">ArchiMate Business Layer - Internal Behavior</div>
<div class="bd" style="position:absolute;left:337.2px;top:504px"></div>
<svg style="position:absolute;left:30px;top:526px" width="10" height="10" viewBox="0 0 10 10"><defs><linearGradient id="eg20" x1="0" y1="0" x2="0" y2="1"><stop offset="0" stop-color="#fff"/><stop offset="1" stop-color="#dcdcdc"/></linearGradient></defs><rect x="0.6" y="0.6" width="8.8" height="8.8" rx="1.5" fill="url(#eg20)" stroke="#aaaaaa" stroke-width="1"/><path d="M2.5 5 H7.5 M5 2.5 V7.5" stroke="#4a5ab0" stroke-width="1.1"/></svg>
<div style="position:absolute;left:41px;top:530px;width:5px;height:1px;background:repeating-linear-gradient(to right,#666 0 1px,transparent 1px 2px)"></div>
<svg style="position:absolute;left:48px;top:523px" width="15" height="12" viewBox="0 0 15 12"><defs><linearGradient id="fg20" x1="0" y1="1" x2="0" y2="0"><stop offset="0" stop-color="#e2e2e2"/><stop offset="1" stop-color="#f4f4f4"/></linearGradient></defs><path d="M1 1 H7 V2.5 H14 V11 H1Z" fill="url(#fg20)" stroke="#b4b4b4" stroke-width="1.6"/><path d="M1 3 H14" stroke="#b4b4b4" stroke-width="1.2"/></svg>
<div class="t tr" style="left:78.5px;top:522.43px;transform:scaleX(0.9141);transform-origin:0 0">ArchiMate Business Layer Pattern</div>
<div class="bd" style="position:absolute;left:272.5px;top:524px"></div>
<svg style="position:absolute;left:30px;top:546px" width="10" height="10" viewBox="0 0 10 10"><defs><linearGradient id="eg21" x1="0" y1="0" x2="0" y2="1"><stop offset="0" stop-color="#fff"/><stop offset="1" stop-color="#dcdcdc"/></linearGradient></defs><rect x="0.6" y="0.6" width="8.8" height="8.8" rx="1.5" fill="url(#eg21)" stroke="#aaaaaa" stroke-width="1"/><path d="M2.5 5 H7.5 M5 2.5 V7.5" stroke="#4a5ab0" stroke-width="1.1"/></svg>
<div style="position:absolute;left:41px;top:550px;width:5px;height:1px;background:repeating-linear-gradient(to right,#666 0 1px,transparent 1px 2px)"></div>
<svg style="position:absolute;left:48px;top:543px" width="15" height="12" viewBox="0 0 15 12"><defs><linearGradient id="fg21" x1="0" y1="1" x2="0" y2="0"><stop offset="0" stop-color="#bdbdbd"/><stop offset="1" stop-color="#e6e6e6"/></linearGradient></defs><path d="M1 1 H7 V2.5 H14 V11 H1Z" fill="url(#fg21)" stroke="#111" stroke-width="1.6"/><path d="M1 3 H14" stroke="#111" stroke-width="1.2"/></svg>
<div class="t tr" style="left:78.5px;top:542.22px;transform:scaleX(0.9053);transform-origin:0 0">ArchiMate Business Passive Structures</div>
<div class="bd" style="position:absolute;left:299.7px;top:544px"></div>
<svg style="position:absolute;left:30px;top:565px" width="10" height="10" viewBox="0 0 10 10"><defs><linearGradient id="eg22" x1="0" y1="0" x2="0" y2="1"><stop offset="0" stop-color="#fff"/><stop offset="1" stop-color="#dcdcdc"/></linearGradient></defs><rect x="0.6" y="0.6" width="8.8" height="8.8" rx="1.5" fill="url(#eg22)" stroke="#aaaaaa" stroke-width="1"/><path d="M2.5 5 H7.5 M5 2.5 V7.5" stroke="#4a5ab0" stroke-width="1.1"/></svg>
<div style="position:absolute;left:41px;top:570px;width:5px;height:1px;background:repeating-linear-gradient(to right,#666 0 1px,transparent 1px 2px)"></div>
<svg style="position:absolute;left:48px;top:563px" width="15" height="12" viewBox="0 0 15 12"><defs><linearGradient id="fg22" x1="0" y1="1" x2="0" y2="0"><stop offset="0" stop-color="#bdbdbd"/><stop offset="1" stop-color="#e6e6e6"/></linearGradient></defs><path d="M1 1 H7 V2.5 H14 V11 H1Z" fill="url(#fg22)" stroke="#111" stroke-width="1.6"/><path d="M1 3 H14" stroke="#111" stroke-width="1.2"/></svg>
<div class="t tr" style="left:78.5px;top:562.01px;transform:scaleX(0.9416);transform-origin:0 0">ArchiMate Composite Elements</div>
<div class="bd" style="position:absolute;left:263.7px;top:564px"></div>
<svg style="position:absolute;left:30px;top:585px" width="10" height="10" viewBox="0 0 10 10"><defs><linearGradient id="eg23" x1="0" y1="0" x2="0" y2="1"><stop offset="0" stop-color="#fff"/><stop offset="1" stop-color="#dcdcdc"/></linearGradient></defs><rect x="0.6" y="0.6" width="8.8" height="8.8" rx="1.5" fill="url(#eg23)" stroke="#aaaaaa" stroke-width="1"/><path d="M2.5 5 H7.5 M5 2.5 V7.5" stroke="#4a5ab0" stroke-width="1.1"/></svg>
<div style="position:absolute;left:41px;top:590px;width:5px;height:1px;background:repeating-linear-gradient(to right,#666 0 1px,transparent 1px 2px)"></div>
<svg style="position:absolute;left:48px;top:583px" width="15" height="12" viewBox="0 0 15 12"><defs><linearGradient id="fg23" x1="0" y1="1" x2="0" y2="0"><stop offset="0" stop-color="#bdbdbd"/><stop offset="1" stop-color="#e6e6e6"/></linearGradient></defs><path d="M1 1 H7 V2.5 H14 V11 H1Z" fill="url(#fg23)" stroke="#111" stroke-width="1.6"/><path d="M1 3 H14" stroke="#111" stroke-width="1.2"/></svg>
<div class="t tr" style="left:78.5px;top:581.80px;transform:scaleX(0.9334);transform-origin:0 0">ArchiMate Element Relationships</div>
<div class="bd" style="position:absolute;left:270.9px;top:583px"></div>
<svg style="position:absolute;left:30px;top:605px" width="10" height="10" viewBox="0 0 10 10"><defs><linearGradient id="eg24" x1="0" y1="0" x2="0" y2="1"><stop offset="0" stop-color="#fff"/><stop offset="1" stop-color="#dcdcdc"/></linearGradient></defs><rect x="0.6" y="0.6" width="8.8" height="8.8" rx="1.5" fill="url(#eg24)" stroke="#aaaaaa" stroke-width="1"/><path d="M2.5 5 H7.5 M5 2.5 V7.5" stroke="#4a5ab0" stroke-width="1.1"/></svg>
<div style="position:absolute;left:41px;top:610px;width:5px;height:1px;background:repeating-linear-gradient(to right,#666 0 1px,transparent 1px 2px)"></div>
<svg style="position:absolute;left:48px;top:602px" width="15" height="12" viewBox="0 0 15 12"><defs><linearGradient id="fg24" x1="0" y1="1" x2="0" y2="0"><stop offset="0" stop-color="#bdbdbd"/><stop offset="1" stop-color="#e6e6e6"/></linearGradient></defs><path d="M1 1 H7 V2.5 H14 V11 H1Z" fill="url(#fg24)" stroke="#111" stroke-width="1.6"/><path d="M1 3 H14" stroke="#111" stroke-width="1.2"/></svg>
<div class="t tr" style="left:78.5px;top:601.59px;transform:scaleX(0.9430);transform-origin:0 0">ArchiMate Folder</div>
<div class="bd" style="position:absolute;left:180.2px;top:603px"></div>
<svg style="position:absolute;left:30px;top:625px" width="10" height="10" viewBox="0 0 10 10"><defs><linearGradient id="eg25" x1="0" y1="0" x2="0" y2="1"><stop offset="0" stop-color="#fff"/><stop offset="1" stop-color="#dcdcdc"/></linearGradient></defs><rect x="0.6" y="0.6" width="8.8" height="8.8" rx="1.5" fill="url(#eg25)" stroke="#aaaaaa" stroke-width="1"/><path d="M2.5 5 H7.5 M5 2.5 V7.5" stroke="#4a5ab0" stroke-width="1.1"/></svg>
<div style="position:absolute;left:41px;top:629px;width:5px;height:1px;background:repeating-linear-gradient(to right,#666 0 1px,transparent 1px 2px)"></div>
<svg style="position:absolute;left:48px;top:622px" width="15" height="12" viewBox="0 0 15 12"><defs><linearGradient id="fg25" x1="0" y1="1" x2="0" y2="0"><stop offset="0" stop-color="#e2e2e2"/><stop offset="1" stop-color="#f4f4f4"/></linearGradient></defs><path d="M1 1 H7 V2.5 H14 V11 H1Z" fill="url(#fg25)" stroke="#b4b4b4" stroke-width="1.6"/><path d="M1 3 H14" stroke="#b4b4b4" stroke-width="1.2"/></svg>
<div class="t tr" style="left:78.5px;top:621.38px;transform:scaleX(0.9482);transform-origin:0 0">ArchiMate Generic MetaModel</div>
<div class="bd" style="position:absolute;left:258.4px;top:623px"></div>
<svg style="position:absolute;left:30px;top:645px" width="10" height="10" viewBox="0 0 10 10"><defs><linearGradient id="eg26" x1="0" y1="0" x2="0" y2="1"><stop offset="0" stop-color="#fff"/><stop offset="1" stop-color="#dcdcdc"/></linearGradient></defs><rect x="0.6" y="0.6" width="8.8" height="8.8" rx="1.5" fill="url(#eg26)" stroke="#aaaaaa" stroke-width="1"/><path d="M2.5 5 H7.5 M5 2.5 V7.5" stroke="#4a5ab0" stroke-width="1.1"/></svg>
<div style="position:absolute;left:41px;top:649px;width:5px;height:1px;background:repeating-linear-gradient(to right,#666 0 1px,transparent 1px 2px)"></div>
<svg style="position:absolute;left:48px;top:642px" width="15" height="12" viewBox="0 0 15 12"><defs><linearGradient id="fg26" x1="0" y1="1" x2="0" y2="0"><stop offset="0" stop-color="#bdbdbd"/><stop offset="1" stop-color="#e6e6e6"/></linearGradient></defs><path d="M1 1 H7 V2.5 H14 V11 H1Z" fill="url(#fg26)" stroke="#111" stroke-width="1.6"/><path d="M1 3 H14" stroke="#111" stroke-width="1.2"/></svg>
<div class="t tr" style="left:78.5px;top:641.17px;transform:scaleX(0.9726);transform-origin:0 0">ArchiMate Implementation and Migration</div>
<div class="bd" style="position:absolute;left:323.1px;top:643px"></div>
<svg style="position:absolute;left:30px;top:664px" width="10" height="10" viewBox="0 0 10 10"><defs><linearGradient id="eg27" x1="0" y1="0" x2="0" y2="1"><stop offset="0" stop-color="#fff"/><stop offset="1" stop-color="#dcdcdc"/></linearGradient></defs><rect x="0.6" y="0.6" width="8.8" height="8.8" rx="1.5" fill="url(#eg27)" stroke="#aaaaaa" stroke-width="1"/><path d="M2.5 5 H7.5 M5 2.5 V7.5" stroke="#4a5ab0" stroke-width="1.1"/></svg>
<div style="position:absolute;left:41px;top:669px;width:5px;height:1px;background:repeating-linear-gradient(to right,#666 0 1px,transparent 1px 2px)"></div>
<svg style="position:absolute;left:48px;top:662px" width="15" height="12" viewBox="0 0 15 12"><defs><linearGradient id="fg27" x1="0" y1="1" x2="0" y2="0"><stop offset="0" stop-color="#bdbdbd"/><stop offset="1" stop-color="#e6e6e6"/></linearGradient></defs><path d="M1 1 H7 V2.5 H14 V11 H1Z" fill="url(#fg27)" stroke="#111" stroke-width="1.6"/><path d="M1 3 H14" stroke="#111" stroke-width="1.2"/></svg>
<div class="t tr" style="left:78.5px;top:660.96px;transform:scaleX(0.9536);transform-origin:0 0">ArchiMate Motivation Elements</div>
<div class="bd" style="position:absolute;left:263.1px;top:663px"></div>
</div>
<svg style="position:absolute;left:354px;top:234px" width="30" height="32" viewBox="0 0 30 32"><defs><linearGradient id="rg" x1="0" y1="0" x2="1" y2="0"><stop offset="0" stop-color="#3cc0ff"/><stop offset="1" stop-color="#1a7fe0"/></linearGradient></defs><circle cx="18.7" cy="9.8" r="6.5" fill="none" stroke="url(#rg)" stroke-width="3.6"/><path d="M3 9.2 V28.5 L7.3 24.3 L10.5 31.3 L13.2 30.2 L10.2 23.2 H16.2Z" fill="#fff" stroke="#333" stroke-width="1"/></svg>
</body></html>
